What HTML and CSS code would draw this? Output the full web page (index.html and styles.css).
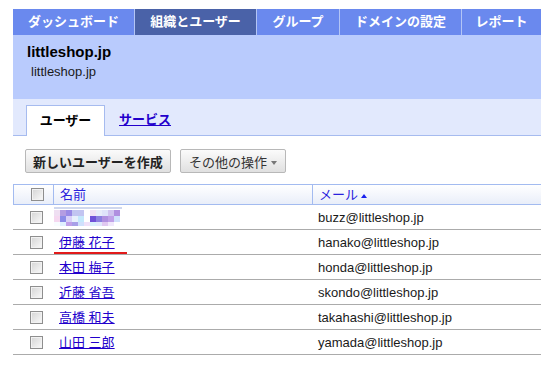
FILE: index.html
```html
<!DOCTYPE html>
<html lang="ja">
<head>
    <meta charset="UTF-8">
    <title>組織とユーザー - littleshop.jp</title>
    <link rel="stylesheet" href="styles.css">
</head>
<body>
<div class="page">
    <nav class="topnav">
        <a class="topnav-item w-wide" href="#">ダッシュボード</a>
        <a class="topnav-item w-wide topnav-active" href="#">組織とユーザー</a>
        <a class="topnav-item w-narrow" href="#">グループ</a>
        <a class="topnav-item w-wide" href="#">ドメインの設定</a>
        <a class="topnav-item topnav-last" href="#">レポート</a>
    </nav>

    <header class="domain-head">
        <h1>littleshop.jp</h1>
        <p>littleshop.jp</p>
    </header>

    <div class="subtabs">
        <span class="subtab subtab-active">ユーザー</span>
        <a class="subtab subtab-link" href="#">サービス</a>
    </div>

    <div class="toolbar">
        <button class="btn btn-create">新しいユーザーを作成</button>
        <button class="btn btn-more">その他の操作 <span class="caret"></span></button>
    </div>

    <table class="users">
        <colgroup>
            <col class="col-check">
            <col class="col-name">
            <col>
        </colgroup>
        <thead>
            <tr>
                <th class="cell-check"><span class="cb"></span></th>
                <th><a href="#">名前</a></th>
                <th><a href="#">メール</a><span class="sort-up"></span></th>
            </tr>
        </thead>
        <tbody>
            <tr>
                <td class="cell-check"><span class="cb"></span></td>
                <td class="cell-name">
                    <svg class="mosaic" width="68" height="20" viewBox="0 0 68 20">
                        <rect x="0" y="0" width="68" height="2" fill="#cfd7ee"/>
                        <rect x="0" y="3" width="6" height="6" fill="#efdff2"/>
                        <rect x="6" y="3" width="6" height="6" fill="#b49de2"/>
                        <rect x="12" y="3" width="6" height="6" fill="#9a8ae6"/>
                        <rect x="18" y="3" width="12" height="6" fill="#c2c5f1"/>
                        <rect x="36" y="3" width="6" height="6" fill="#f1e1f5"/>
                        <rect x="42" y="3" width="6" height="6" fill="#e8ecfa"/>
                        <rect x="48" y="3" width="6" height="6" fill="#dfe3fa"/>
                        <rect x="54" y="3" width="6" height="6" fill="#d0c3f0"/>
                        <rect x="60" y="3" width="6" height="6" fill="#b08fe0"/>
                        <rect x="0" y="9" width="6" height="6" fill="#f5d8f0"/>
                        <rect x="6" y="9" width="6" height="6" fill="#8c8ce8"/>
                        <rect x="12" y="9" width="6" height="6" fill="#d8cff8"/>
                        <rect x="18" y="9" width="6" height="6" fill="#e8f0fc"/>
                        <rect x="24" y="9" width="6" height="6" fill="#c4e8fc"/>
                        <rect x="36" y="9" width="6" height="6" fill="#7050d8"/>
                        <rect x="42" y="9" width="6" height="6" fill="#8c80e0"/>
                        <rect x="48" y="9" width="6" height="6" fill="#b090e0"/>
                        <rect x="54" y="9" width="6" height="6" fill="#c0a0e8"/>
                        <rect x="60" y="9" width="6" height="6" fill="#d0e0fc"/>
                        <rect x="0" y="15" width="6" height="4" fill="#f8fcff"/>
                        <rect x="6" y="15" width="6" height="4" fill="#e0f0ff"/>
                        <rect x="12" y="15" width="6" height="4" fill="#c0a0e8"/>
                        <rect x="18" y="15" width="6" height="4" fill="#a8a0e8"/>
                        <rect x="24" y="15" width="6" height="4" fill="#d0e0fc"/>
                        <rect x="30" y="15" width="6" height="4" fill="#f0e0f8"/>
                        <rect x="36" y="15" width="6" height="4" fill="#d8f0fc"/>
                        <rect x="42" y="15" width="6" height="4" fill="#e0e8fc"/>
                        <rect x="48" y="15" width="6" height="4" fill="#e0c8f0"/>
                        <rect x="54" y="15" width="6" height="4" fill="#f0e8fc"/>
                    </svg>
                </td>
                <td>buzz@littleshop.jp</td>
            </tr>
            <tr>
                <td class="cell-check"><span class="cb"></span></td>
                <td class="cell-name"><a href="#">伊藤 花子</a><span class="red-mark"></span></td>
                <td>hanako@littleshop.jp</td>
            </tr>
            <tr>
                <td class="cell-check"><span class="cb"></span></td>
                <td class="cell-name"><a href="#">本田 梅子</a></td>
                <td>honda@littleshop.jp</td>
            </tr>
            <tr>
                <td class="cell-check"><span class="cb"></span></td>
                <td class="cell-name"><a href="#">近藤 省吾</a></td>
                <td>skondo@littleshop.jp</td>
            </tr>
            <tr>
                <td class="cell-check"><span class="cb"></span></td>
                <td class="cell-name"><a href="#">高橋 和夫</a></td>
                <td>takahashi@littleshop.jp</td>
            </tr>
            <tr>
                <td class="cell-check"><span class="cb"></span></td>
                <td class="cell-name"><a href="#">山田 三郎</a></td>
                <td>yamada@littleshop.jp</td>
            </tr>
        </tbody>
    </table>
</div>
</body>
</html>
```

FILE: styles.css
```css
*{
    margin: 0;
    padding: 0;
    box-sizing: border-box;
}
body{
    background-color: #ffffff;
    color: #222222;
    font-family: "Liberation Sans", "Noto Sans CJK JP", sans-serif;
    font-size: 13px;
    overflow: hidden;
}
.page{
    padding: 9px 0 0 13px;
}

/* top navigation */
.topnav{
    display: flex;
    height: 26px;
    background-color: #6a89ee;
}
.topnav-item{
    display: block;
    height: 26px;
    line-height: 26px;
    text-align: center;
    color: #ffffff;
    font-weight: bold;
    font-size: 13px;
    text-decoration: none;
    border-right: 1px solid #b3c5f6;
}
.w-wide{
    width: 122px;
}
.w-narrow{
    width: 83px;
}
.topnav-last{
    width: 79px;
    border-right: none;
}
.topnav-active{
    background-color: #4a62a8;
}

/* domain header */
.domain-head{
    height: 64px;
    background-color: #b9cbfd;
    padding: 8px 14px 0;
    h1{
        font-size: 15px;
        line-height: 17px;
        color: #000000;
    }
    p{
        margin-top: 4px;
        padding-left: 4px;
        font-size: 13px;
        line-height: 15px;
        color: #1a1a1a;
    }
}

/* sub tabs */
.subtabs{
    display: flex;
    align-items: flex-end;
    height: 37px;
    padding-left: 13px;
    background-color: #e2e9fd;
    border-bottom: 1px solid #a6bbef;
}
.subtab{
    height: 31px;
    line-height: 30px;
    font-weight: bold;
    font-size: 13px;
    margin-bottom: -1px;
}
.subtab-active{
    width: 79px;
    text-align: center;
    color: #000000;
    background-color: #ffffff;
    border: 1px solid #a6bbef;
    border-bottom: none;
}
.subtab-link{
    margin-left: 14px;
    color: #2200cc;
    text-decoration: underline;
}

/* toolbar */
.toolbar{
    display: flex;
    gap: 9px;
    padding: 13px 0 0 12px;
}
.btn{
    height: 24px;
    font-family: inherit;
    font-size: 13px;
    color: #222222;
    text-align: left;
    white-space: nowrap;
    padding: 0 0 0 7px;
    border: 1px solid #b8b8b8;
    border-radius: 2px;
    background: linear-gradient(#fbfbfb, #e0e0e0);
}
.btn-create{
    width: 146px;
    font-weight: bold;
}
.btn-more{
    width: 106px;
    padding-left: 8px;
    color: #333333;
}
.caret{
    display: inline-block;
    vertical-align: middle;
    border-left: 3.5px solid transparent;
    border-right: 3.5px solid transparent;
    border-top: 4px solid #777777;
}

/* users table */
.users{
    margin-top: 11px;
    width: 100%;
    table-layout: fixed;
    border-collapse: separate;
    border-spacing: 0;
    .col-check{
        width: 40px;
    }
    .col-name{
        width: 259px;
    }
    th{
        height: 21px;
        text-align: left;
        font-weight: normal;
        padding: 0 6px;
        line-height: 17px;
        border-top: 1px solid #a3bbf0;
        border-bottom: 1px solid #a3bbf0;
        border-left: 1px solid #a3bbf0;
        background: linear-gradient(#ffffff, #e9eef9);
        a{
            color: #2a22dd;
            text-decoration: none;
        }
    }
    td{
        height: 25px;
        padding: 0 6px;
        line-height: 17px;
        border-bottom: 1px solid #ababab;
        color: #1a1a1a;
        white-space: nowrap;
    }
    .cell-check{
        padding: 0 0 0 17px;
        line-height: 0;
    }
    td.cell-name{
        position: relative;
        a{
            color: #2200cc;
            text-decoration: underline;
        }
    }
}
.cb{
    display: inline-block;
    width: 13px;
    height: 13px;
    border: 1px solid #8e8e8e;
    box-shadow: inset 0 0 0 1px #f2f2f2;
    background: linear-gradient(135deg, #d4d4d4, #fafafa);
}
.sort-up{
    display: inline-block;
    vertical-align: middle;
    margin-left: 3px;
    border-left: 3.5px solid transparent;
    border-right: 3.5px solid transparent;
    border-bottom: 4px solid #1a22ee;
}
.mosaic{
    display: block;
    margin-left: -5px;
}
.red-mark{
    position: absolute;
    left: 1px;
    bottom: 0;
    width: 73px;
    height: 2px;
    background-color: #e21a1a;
}
```
